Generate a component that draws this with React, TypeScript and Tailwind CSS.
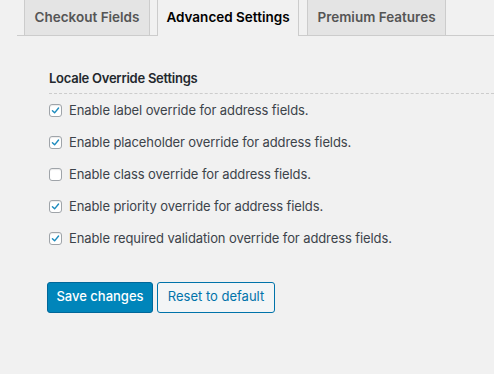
import React from "react";

const items = [
  { label: "Enable label override for address fields.", checked: true },
  { label: "Enable placeholder override for address fields.", checked: true },
  { label: "Enable class override for address fields.", checked: false },
  { label: "Enable priority override for address fields.", checked: true },
  { label: "Enable required validation override for address fields.", checked: true },
];

function Box({ checked }: { checked: boolean }) {
  return (
    <span className="flex h-[13px] w-[13px] shrink-0 items-center justify-center rounded-[3px] border border-[#9fa4a9] bg-white shadow-[inset_0_1px_1px_rgba(0,0,0,0.08)]">
      {checked && (
        <svg width="9" height="9" viewBox="0 0 10 10" fill="none">
          <path d="M1.6 5.2 L4 7.6 L8.4 2.2" stroke="#1e8cbe" strokeWidth="1.6" strokeLinecap="round" strokeLinejoin="round" />
        </svg>
      )}
    </span>
  );
}

export default function App() {
  return (
    <div
      className="h-[374px] w-[494px] overflow-hidden bg-[#f1f1f1]"
      style={{ fontFamily: 'Inter, "Liberation Sans", Arial, sans-serif' }}
    >
      <div className="ml-[17px] flex h-[36px] items-end border-b border-[#ccc] pl-[7px]">
        <div className="flex h-[36px] w-[126px] shrink-0 items-center justify-center border border-b-0 border-[#ccc] bg-[#e4e4e4] text-[13.5px] font-semibold text-[#555]">
          Checkout Fields
        </div>
        <div className="relative -mb-px ml-[7px] flex h-[37px] w-[142px] shrink-0 items-center justify-center border border-b-0 border-[#ccc] bg-[#f1f1f1] pb-px text-[13.5px] font-semibold text-black">
          Advanced Settings
        </div>
        <div className="ml-[8px] flex h-[36px] w-[139px] shrink-0 items-center justify-center border border-b-0 border-[#ccc] bg-[#e4e4e4] text-[13.5px] font-semibold text-[#555]">
          Premium Features
        </div>
      </div>
      <div className="pl-[49px] pt-[33px]">
        <div className="border-b border-dashed border-[#ccc] pb-[4px] text-[13px] font-semibold tracking-[-0.25px] text-[#23282d]">
          Locale Override Settings
        </div>
        <div className="flex flex-col gap-[16px] pt-[9px]">
          {items.map((it) => (
            <label key={it.label} className="flex h-[16px] items-center gap-[7px] text-[13px] tracking-[-0.1px] text-[#3c434a]">
              <Box checked={it.checked} />
              <span>{it.label}</span>
            </label>
          ))}
        </div>
        <div className="-ml-[2px] flex gap-[4px] pt-[35px]">
          <button className="h-[31px] w-[106px] rounded-[3px] border border-[#006799] bg-[#0085ba] text-[13px] font-medium text-white">
            Save changes
          </button>
          <button className="h-[31px] w-[118px] rounded-[3px] border border-[#0073aa] bg-[#f3f5f6] text-[13px] text-[#0073aa]">
            Reset to default
          </button>
        </div>
      </div>
    </div>
  );
}
